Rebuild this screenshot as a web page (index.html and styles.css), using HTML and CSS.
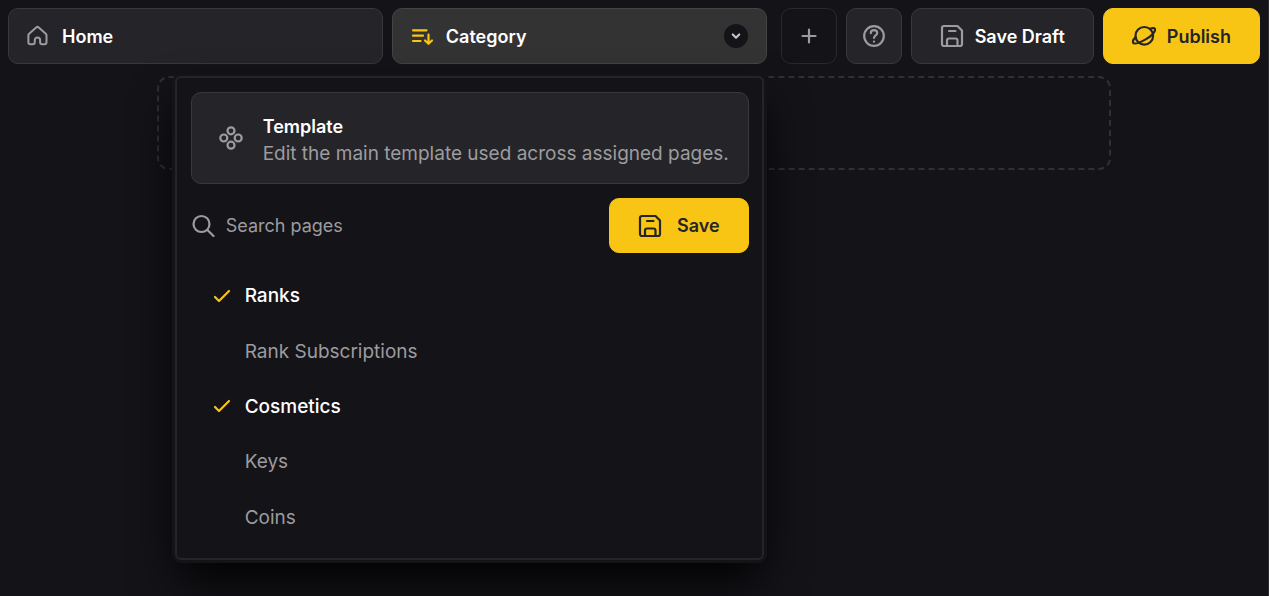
FILE: index.html
```html
<!DOCTYPE html>
<html lang="en">
<head>
<meta charset="utf-8">
<meta name="viewport" content="width=device-width, initial-scale=1">
<title>Page editor</title>
<link rel="stylesheet" href="styles.css">
</head>
<body>
<svg class="sprite" aria-hidden="true">
  <symbol id="floppy" viewBox="0 0 24 24">
    <path d="M4 2h13.500L22 6.500V20a2 2 0 0 1-2 2H4a2 2 0 0 1-2-2V4a2 2 0 0 1 2-2Z"/>
    <path d="M7 22v-5.500a2 2 0 0 1 2-2h6.500a2 2 0 0 1 2 2V22M9 7h6.500"/>
  </symbol>
  <symbol id="check" viewBox="0 0 18 14">
    <path d="m2 8 4 4L16 2"/>
  </symbol>
</svg>
<header class="topbar">
  <button class="page-tab" type="button">
    <svg class="icon" viewBox="-.4 -.2 26 26"><path d="M3 10.300 10.600 3.500q1.400-1.200 2.800 0L21 10.300q.8.800.8 1.800V19.500a2.200 2.200 0 0 1-2.200 2.200h-2.500a2.200 2.200 0 0 1-2.200-2.200v-2.200a2.900 2.900 0 0 0-5.800 0v2.200a2.200 2.200 0 0 1-2.200 2.200H4.400a2.200 2.200 0 0 1-2.200-2.200V12.100q0-1 .8-1.800Z"/></svg>
    <span>Home</span>
  </button>
  <div class="tab-wrap">
    <button class="page-tab page-tab-active" type="button" aria-expanded="true">
      <svg class="icon icon-accent" viewBox="0 0 24 24"><path d="M3 6.300h13.500M3 11.700h10M3 17h7.500M18.500 10.500v9M15 16.500l3.500 3.300 3.500-3.300"/></svg>
      <span>Category</span>
      <span class="chevron"><svg viewBox="0 0 24 24"><path d="m8.800 10.500 3.200 3.200 3.200-3.200"/></svg></span>
    </button>
    <section class="menu" aria-label="Category pages">
      <button class="template" type="button">
        <svg class="icon" viewBox="0 0 24 24"><circle cx="12" cy="4.800" r="3.500"/><circle cx="12" cy="19.200" r="3.500"/><circle cx="4.800" cy="12" r="3.500"/><circle cx="19.200" cy="12" r="3.500"/></svg>
        <span class="template-text">
          <span class="template-title">Template</span>
          <span class="template-note">Edit the main template used across assigned pages.</span>
        </span>
      </button>
      <div class="search-row">
        <label class="search-label" for="search" aria-label="Search pages"><svg class="icon" viewBox="0 0 24 24"><circle cx="10.500" cy="10" r="8"/><path d="m16.500 16 6 6"/></svg></label>
        <input class="search" id="search" type="search" placeholder="Search pages">
        <button class="button button-primary button-save" type="button"><svg class="icon"><use href="#floppy"/></svg><span>Save</span></button>
      </div>
      <div class="page-list">
        <label class="page-item"><input type="checkbox" checked><svg class="tick"><use href="#check"/></svg><span>Ranks</span></label>
        <label class="page-item"><input type="checkbox"><svg class="tick"><use href="#check"/></svg><span>Rank Subscriptions</span></label>
        <label class="page-item"><input type="checkbox" checked><svg class="tick"><use href="#check"/></svg><span>Cosmetics</span></label>
        <label class="page-item"><input type="checkbox"><svg class="tick"><use href="#check"/></svg><span>Keys</span></label>
        <label class="page-item"><input type="checkbox"><svg class="tick"><use href="#check"/></svg><span>Coins</span></label>
      </div>
    </section>
  </div>
  <div class="actions">
    <button class="button button-square button-ghost" type="button" aria-label="Add page"><svg class="icon" viewBox="0 0 24 24"><path d="M12 5.500v13M5.500 12h13"/></svg></button>
    <button class="button button-square" type="button" aria-label="Help"><svg class="icon" viewBox="0 0 24 24"><circle cx="12" cy="12" r="9.800"/><path d="M8.800 9.200c0-1.800 1.400-3 3.200-3s3.200 1.200 3.200 2.900c0 2.300-3.200 2.400-3.200 4.900"/><path d="M12 17.500v.2"/></svg></button>
    <button class="button button-draft" type="button"><svg class="icon"><use href="#floppy"/></svg><span>Save Draft</span></button>
    <button class="button button-primary button-publish" type="button"><svg class="icon" viewBox="0 0 24 24"><circle cx="12.300" cy="11.800" r="8.800"/><path d="M18 4.700c3-1 4.800-.7 5.100.5.600 2.600-4 7.200-9.900 10.400S2.300 20.800 1.100 18.700c-.7-1.300.3-3.300 2.400-5.400"/></svg><span>Publish</span></button>
  </div>
</header>
<main class="canvas"><div class="dropzone"></div></main>
</body>
</html>
```
FILE: styles.css
```css
* { box-sizing: border-box; }

body {
  margin: 0;
  min-height: 100vh;
  background: #141318;
  border-right: 1px solid #29282d;
  color: #fff;
  font: 500 18px/27px Inter, "Liberation Sans", sans-serif;
}

button, input { font: inherit; color: inherit; }
button { cursor: pointer; }

svg {
  fill: none;
  stroke: currentColor;
  stroke-width: 2.2;
  stroke-linecap: round;
  stroke-linejoin: round;
  flex: none;
}

.sprite { position: absolute; width: 0; height: 0; }
.icon { width: 24px; height: 24px; color: #9c9c9f; }

.topbar {
  display: grid;
  grid-template-columns: minmax(0, 1fr) minmax(0, 1fr) auto;
  gap: 9px;
  padding: 8px;
}

.page-tab {
  display: flex;
  align-items: center;
  gap: 12px;
  height: 56px;
  padding: 0 18px 0 17px;
  border: 1px solid #39383d;
  border-radius: 10px;
  background: #252429;
  font-weight: 600;
}

.page-tab-active { width: 100%; background: #333334; border-color: #444447; }
.icon-accent { color: #f9c515; }

.chevron {
  display: grid;
  place-items: center;
  width: 24px;
  height: 24px;
  margin-left: auto;
  border-radius: 50%;
  background: #141318;
  color: #c4c4c6;
}
.chevron svg { width: 24px; height: 24px; }

.tab-wrap { position: relative; z-index: 1; }

.menu {
  position: absolute;
  top: 68px;
  right: 3px;
  width: 589px;
  padding: 14px 13px 13px 14px;
  border: 2px solid #252429;
  border-radius: 6px;
  background: #141318;
  box-shadow: 0 0 0 3px #141318, 0 24px 48px -4px #000;
}

.template {
  display: flex;
  align-items: center;
  gap: 20px;
  width: 100%;
  min-height: 92px;
  padding: 0 27px;
  border: 1px solid #39383d;
  border-radius: 10px;
  background: #252429;
  text-align: left;
}
.template-text {
  display: flex;
  flex-direction: column;
  padding-top: 4px;
  white-space: nowrap;
}
.template-title { font-weight: 600; }
.template-note { color: #9c9c9f; font-size: 19px; font-weight: 400; }

.search-row { display: flex; align-items: center; margin: 14px 0 15px; }
.search-label { display: flex; }
.search {
  flex: 1;
  min-width: 0;
  padding: 0 11px;
  border: 0;
  outline: 0;
  background: none;
  font-weight: 400;
}
.search::placeholder { color: #9c9c9f; opacity: 1; }

.page-list { display: grid; grid-auto-rows: 1fr; height: 277px; }
.page-item {
  display: flex;
  align-items: center;
  gap: 14px;
  padding-left: 22px;
  color: #9c9c9f;
  font-size: 19px;
  font-weight: 400;
}
.page-item input { position: absolute; opacity: 0; pointer-events: none; }
.page-item:has(:checked) { color: #fff; font-weight: 500; }
.tick { width: 18px; height: 14px; color: #f9c515; visibility: hidden; }
:checked + .tick { visibility: visible; }

.actions { display: flex; gap: 9px; margin-left: 5px; }

.button {
  display: flex;
  align-items: center;
  justify-content: center;
  height: 56px;
  padding: 0 28px;
  border: 1px solid #39383d;
  border-radius: 10px;
  background: #252429;
  font-weight: 600;
  white-space: nowrap;
}
.button-square { width: 56px; padding: 0; }
.button-ghost { background: none; border-color: #29282d; }
.button-draft, .button-publish { gap: 11px; }
.button-primary { border-color: #f9c515; background: #f9c515; color: #252429; }
.button-primary .icon { color: inherit; }
.button-save { height: 55px; gap: 15px; }

.canvas { padding: 4px 157px 24px; }
.dropzone { height: 94px; border: 2px dashed #303034; border-radius: 12px; }
```
